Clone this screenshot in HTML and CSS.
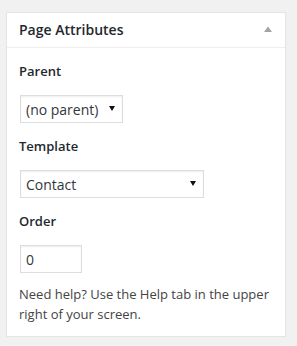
FILE: index.html
```html
<!DOCTYPE html>
<html lang="en">
<head>
    <meta charset="UTF-8">
    <meta name="viewport" content="width=device-width, initial-scale=1.0">
    <title>Page Attributes</title>
    <link rel="stylesheet" href="styles.css">
</head>
<body>
    <div class="postbox">
        <div class="hndle">
            <span>Page Attributes</span>
            <svg class="toggle-arrow" width="8" height="6" viewBox="0 0 8 6">
                <polygon points="4,0.5 8,6 0,6" fill="#a0a5aa"/>
            </svg>
        </div>
        <div class="inside">
            <p class="field-label">Parent</p>
            <span class="select-wrap parent-select">
                <select>
                    <option>(no parent)</option>
                </select>
            </span>
            <p class="field-label">Template</p>
            <span class="select-wrap template-select">
                <select>
                    <option>Contact</option>
                </select>
            </span>
            <p class="field-label">Order</p>
            <input class="order-input" type="text" value="0">
            <p class="help-text">Need help? Use the Help tab in the upper right of your screen.</p>
        </div>
    </div>
</body>
</html>
```

FILE: styles.css
```css
body {
    font-family: "Open Sans", "Liberation Sans", sans-serif;
    font-size: 13px;
    line-height: 20px;
    color: #444;
    background-color: #f1f1f1;
    margin: 0;
    padding: 12px 0 0 6px;
}
.postbox {
    width: 280px;
    box-sizing: border-box;
    background-color: #fff;
    border: 1px solid #e5e5e5;
    box-shadow: 0 1px 1px rgba(0, 0, 0, 0.04);
}
.hndle {
    display: flex;
    justify-content: space-between;
    align-items: center;
    padding: 7px 13px 7px 12px;
    font-size: 14px;
    font-weight: 600;
    line-height: 20px;
    color: #23282d;
    border-bottom: 1px solid #eee;
}
.toggle-arrow {
    display: block;
    margin-top: -2px;
}
.inside {
    padding: 13px 12px 12px;
}
.field-label {
    margin: 0 0 14px;
    font-weight: 600;
    color: #23282d;
}
.select-wrap {
    position: relative;
    display: block;
    margin: 0 0 13px 1px;
}
.select-wrap select {
    appearance: none;
    -webkit-appearance: none;
    display: block;
    box-sizing: border-box;
    width: 100%;
    height: 28px;
    margin: 0;
    padding: 0 5px;
    font-family: inherit;
    font-size: 14px;
    color: #32373c;
    background-color: #fff;
    border: 1px solid #ddd;
    border-radius: 0;
    box-shadow: inset 0 1px 2px rgba(0, 0, 0, 0.07);
    outline: none;
}
.select-wrap::after {
    content: "";
    position: absolute;
    right: 8px;
    top: 11px;
    border-left: 3px solid transparent;
    border-right: 3px solid transparent;
    border-top: 5px solid #111;
    pointer-events: none;
}
.parent-select {
    width: 103px;
}
.template-select {
    width: 184px;
}
.order-input {
    display: block;
    box-sizing: border-box;
    width: 62px;
    height: 28px;
    margin: 0 0 11px 1px;
    padding: 0 5px;
    font-family: inherit;
    font-size: 14px;
    color: #32373c;
    background-color: #fff;
    border: 1px solid #ddd;
    box-shadow: inset 0 1px 2px rgba(0, 0, 0, 0.07);
    outline: none;
}
.help-text {
    margin: 0;
}
```
